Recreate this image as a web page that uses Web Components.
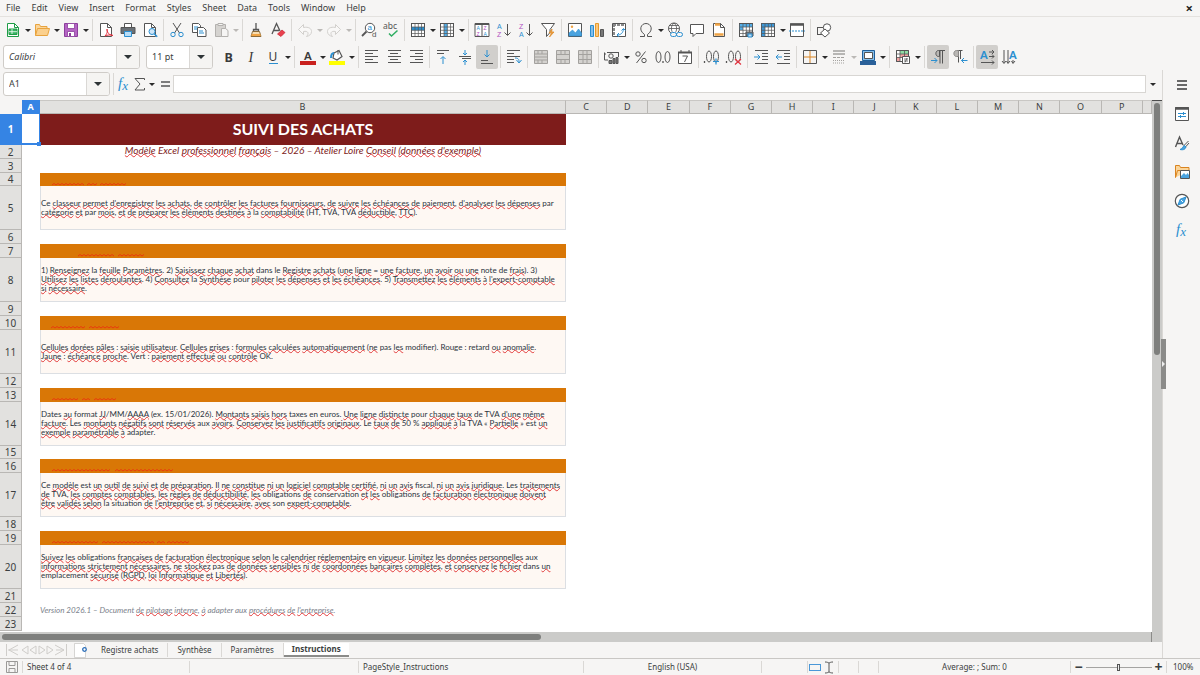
<!DOCTYPE html>
<html lang="fr">
<head>
<meta charset="utf-8">
<title>Suivi des achats</title>
<style>
html, body { margin: 0; height: 100%; }
body { font: 9px/14px "Noto Sans", sans-serif; color: #3b3e40; background: #f6f5f4; overflow: hidden;
  --line: #dad8d5; --blue: #3584e4; --grid: #b9b7b4; --head: #e2e1df; }
</style>
</head>
<body>
<calc-app></calc-app>
<script>
const G = '#555', B = '#2b8fd0';
const lines = (rows, c = G) => rows.map(([x1, x2, y]) => `<path d="M${x1} ${y}H${x2}" stroke="${c}"/>`).join('');
const grid = (fill) => `<rect x="1.5" y="1.5" width="13" height="13" fill="#fff"/>${fill}<path d="M1.5 1.5h13v13h-13zM5 2v12M8.3 2v12M11.5 2v12M2 5h12M2 8.3h12M2 11.5h12" stroke="${G}" stroke-width=".7"/>`;
const page = '<path d="M2.5 1.5h7l4 4v9h-11z" fill="#fff"/>';
const T = (x, y, s, t, c, extra = '') => `<text x="${x}" y="${y}" font-size="${s}" fill="${c}" stroke="none" ${extra}>${t}</text>`;
const LS = 'font-family="Liberation Sans"', P = '#b04fc0';
const ICONS = {
  new: `<g stroke="#1f9d47">${page}<path d="M9.500 1.500v4h4"/><path d="M4 7h8v5.500h-8z" fill="#39b463"/><path d="M4 9.700h8M7 7v5" stroke="#fff" stroke-width=".8"/></g>`,
  open: `<path d="M1.500 13.500v-11h4l1 2h6.500v2" fill="#fbd59a" stroke="#e8a33d"/><path d="M1.500 13.500l2-7h12l-2 7z" fill="#fbd08d" stroke="#e8a33d"/>`,
  save: `<path d="M1.500 1.500h13v13h-13z" fill="#b565c4" stroke="#8c3f9c"/><path d="M4.500 1.500h7v5h-7zM4.500 9.500h7v5h-7z" fill="#fff" stroke="#8c3f9c" stroke-width=".8"/><path d="M6 11h2v3H6z" fill="#8c3f9c" stroke="none"/>`,
  pdf: `${page}<path d="M9.500 1.500v4h4"/><path d="M7 14c3-3 2.500-7 2-7s0 6 6 6.500c-2-1.200-6-.5-8 .5z" stroke="#e2323f" fill="none"/>`,
  print: `<path d="M4.500 5v-3.500h7V5" fill="#fff"/><path d="M1 5.500h14v6H1z" fill="#6a7075"/><path d="M4.500 9.500h7v5h-7z" fill="#b9dcf5" stroke="${B}"/>`,
  preview: `${page}<path d="M9.500 1.500v4h4"/><circle cx="10" cy="9.500" r="3" fill="#cfe6f8" stroke="${B}"/><path d="M12.200 11.700l3 3" stroke="${B}" stroke-width="1.500"/>`,
  cut: `<path d="M4 1l6.500 10M12 1L5.500 11"/><circle cx="4" cy="12.500" r="2.200" stroke="${B}"/><circle cx="12" cy="12.500" r="2.200" stroke="${B}"/>`,
  copy: `<path d="M1.500 1.500h6l2 2v7h-8z" fill="#fff"/><path d="M6.500 5.500h6l2.500 2.500v6.500H6.500z" fill="#fff"/><path d="M3 5h4M3 7h3M8 9h4M8 11h5" stroke="${B}"/>`,
  paste: `<g stroke="#b3b1ae"><path d="M2.500 2.500h10v12h-10z" fill="#d5d3d0"/><path d="M5 1.500h5v2H5z" fill="#f6f5f4"/><path d="M8.500 6.500h4l2.500 2v6H8.500z" fill="#f6f5f4"/></g>`,
  brush: `<path d="M8 1v6M5.500 7.500h5v2h-5z" fill="#fff" stroke-width="1.300"/><path d="M4.500 9.500h7l1.500 5h-10z" fill="#f8ddb0" stroke="#8a6a3a"/><path d="M3.500 13h9" stroke="#f0a445" stroke-width="2"/>`,
  clear: `<path d="M2 12L6.500 1.500 10 9M3.500 8.500H9" stroke-width="1.300"/><path d="M7.500 12l4.500-4 3 2.500-4 4z" fill="#e9414e" stroke="#c9202d" stroke-width=".7"/>`,
  undo: `<path d="M1.500 7.500l5-5v3c5-1 8 1 8 4s-2.500 4.500-5 5c3-3 1.500-6-3-5v3z" stroke="#d2d0cd" fill="#f9f8f7"/>`,
  redo: `<path d="M14.500 7.500l-5-5v3c-5-1-8 1-8 4s2.500 4.500 5 5c-3-3-1.500-6 3-5v3z" stroke="#d2d0cd" fill="#f9f8f7"/>`,
  find: `<circle cx="9" cy="6" r="4.700" fill="#fff"/><path d="M5.500 9.500l-4.500 4.500" stroke-width="1.800"/>${T(6.500, 8, 8, 'a', B, LS)}${T(11, 15, 8, 'd', G, LS)}`,
  spell: `${T(0, 7, 8.500, 'abc', G)}<path d="M6 11.500l2.500 2.500 6-5.500" stroke="#2fae62" stroke-width="1.500"/>`,
  row: grid(`<path d="M1.500 5h13v3.300h-13z" fill="${B}" stroke="none"/>`),
  col: grid(`<path d="M5 2h3.500v12H5z" fill="#54aee8" stroke="none"/>`),
  sort: `<path d="M1 1.500h14v13H1zM8 2v12" fill="#fff"/><path d="M1 2h14" stroke-width="2"/>${T(2.500, 8, 5, 'A', B, LS)}${T(2.500, 14, 5, 'Z', P, LS)}${T(9.500, 8, 5, 'Z', P, LS)}${T(9.500, 14, 5, 'A', B, LS)}`,
  asc: `${T(1, 6.500, 7, 'A', B, LS)}${T(1, 15, 7, 'Z', P, LS)}<path d="M11.500 2v11M8.500 10.500l3 3 3-3"/>`,
  desc: `${T(1, 6.500, 7, 'Z', P, LS)}${T(1, 15, 7, 'A', B, LS)}<path d="M11.500 2v11M8.500 10.500l3 3 3-3"/>`,
  filter: `<path d="M1.500 1.500h13L10 7.500v3l-3.500 4v-7z" fill="#fff"/><path d="M12 7l-3 4h2.500l-2 4 4.500-5h-2.300z" fill="#f0a445" stroke="#d98420" stroke-width=".7"/>`,
  image: `<path d="M1.500 1.500h13v13h-13z" fill="#fff"/><path d="M2 14v-3l3.500-3 3 3 3-4 3 4v3z" fill="#4aa3df" stroke="${B}" stroke-width=".6"/><circle cx="5" cy="4.800" r="1.200" fill="#f0a445" stroke="none"/>`,
  chart: `<path d="M1.500 3.500h3v11h-3z" fill="#83beec" stroke="${B}"/><path d="M6.500 1.500h3v13h-3z" fill="#fbc77f" stroke="#e69b2b"/><path d="M11.500 7.500h3v7h-3z" fill="#777"/>`,
  pivot: `<path d="M1.500 1.500h13v13h-13z" fill="#fff"/><path d="M2 3h12M3 2v12" stroke="#8a8a8a" stroke-width="2" stroke-dasharray="3 1"/><path d="M6 13c4 0 6-2 6.500-6M10.500 8.500l2-2 2 2M8 11l-2 2 2 1.700" stroke="${B}"/>`,
  omega: `<path d="M2 14.500h4.500v-2C0 8 3 1.500 8 1.500s8 6.500 1.500 11v2H14"/>`,
  link: `<circle cx="7" cy="6.500" r="5.500" fill="#fff"/><path d="M1.500 6.500h11M7 1c-3.500 3-3.500 8 0 11M7 1c3.500 3 3.500 8 0 11M2.500 3.500h9" stroke-width=".8"/><path d="M4 10h11v5H4z" fill="#f6f5f4" stroke="none"/><rect x="3.500" y="10.500" width="6" height="4" rx="2" stroke="${B}"/><rect x="9.500" y="10.500" width="6" height="4" rx="2" stroke="${B}"/>`,
  comment: `<path d="M1.500 2.500h13v9H7l-3 3v-3H1.500z" fill="#fff"/>`,
  header: `${page}<path d="M4 2.500h5M3.500 12.500h9" stroke="#f0a445" stroke-width="2.500"/><path d="M9.500 1.500v4h4"/>`,
  printarea: grid(`<path d="M1.500 2h13v3h-13zM1.500 5H5v3H1.500z" fill="#54aee8" stroke="none"/>`) + `<path d="M8 10h7v4H8z" fill="#6a7f90"/><path d="M10 12h4v3h-4z" fill="#b9dcf5" stroke="${B}"/>`,
  freeze: grid(`<path d="M1.500 1.500h13V5H5v9.500H1.500z" fill="#3e98d8" stroke="none"/>`),
  split: `<path d="M1.500 2h13v12.500h-13z" fill="#fff"/><path d="M1 2.500h14" stroke-width="2.500"/><path d="M0 9h16" stroke="${B}" stroke-dasharray="2 1"/>`,
  draw: `<rect x="1.500" y="5.500" width="7" height="7"/><circle cx="11" cy="5.500" r="3.700" fill="#fff"/><path d="M9 7l4.500 4-4.500 4-4.500-4z" fill="#fff"/>`,
  bold: T(3.500, 12.500, 12.500, 'B', '#3a3a3a', 'font-weight="700"'),
  italic: T(5.500, 13, 14, 'I', '#3a3a3a', 'font-style="italic" font-family="Liberation Serif"'),
  underline: `${T(3.500, 12, 12, 'U', '#3a3a3a')}<path d="M4 14.500h9" stroke="${B}"/>`,
  fontcolor: `${T(4, 10.500, 11.500, 'A', '#3a3a3a', 'font-weight="600"')}<path d="M0 14h16" stroke="#c9211e" stroke-width="4"/>`,
  highlight: `<path d="M5 4l5-2.500 3 6-5 3.500-4-2z" fill="#fff" stroke-width="1.200"/><path d="M2 9c0-4 1-5 3-5" stroke="${B}" stroke-width="2"/><path d="M9 5.500V1"/><path d="M0 14h16" stroke="#ff0" stroke-width="4"/>`,
  left: lines([[1, 14, 1.500], [1, 9, 4.500], [1, 14, 7.500], [1, 9, 10.500], [1, 14, 13.500]]),
  center: lines([[2, 15, 1.500], [4, 12, 4.500], [2, 15, 7.500], [4, 12, 10.500], [2, 15, 13.500]]),
  right: lines([[2, 15, 1.500], [7, 15, 4.500], [2, 15, 7.500], [7, 15, 10.500], [2, 15, 13.500]]),
  top: lines([[2, 14, 1.500], [2, 9, 4.500]]) + `<path d="M8 15V8M5.500 10L8 7.500l2.500 2.500" stroke="${B}"/>`,
  middle: lines([[2, 14, 7.500], [5, 14, 9.500]]) + `<path d="M8 1v5M6 4l2 2 2-2M8 16v-5M6 13l2-2 2 2" stroke="${B}"/>`,
  bottom: lines([[2, 14, 14.500], [2, 9, 11.500]]) + `<path d="M8 1v7M5.500 5.500L8 8l2.500-2.500" stroke="${B}"/>`,
  wrap: lines([[1, 14, 1.500], [1, 8, 4.500], [1, 14, 7.500], [1, 8, 10.500], [1, 8, 13.500]]) + `<path d="M9 9c4 0 4 2 4 4M10.500 11l2.500 3 2.500-3" stroke="${B}"/>`,
  merge: `<g stroke="#a3a19e"><path d="M1.500 1.500h13v13h-13z" fill="#d4d2cf"/><path d="M1.500 5h13M1.500 8h13M1.500 11h13M5 2v3M9 2v3M5 11v3M9 11v3"/></g>`,
  merge2: `<g stroke="#a3a19e"><path d="M1.500 1.500h13v13h-13z" fill="#d4d2cf"/><path d="M1.500 5.500h13M1.500 10.500h13M6 2v3M10 2v3M6 11v3M10 11v3"/></g>`,
  split2: `<g stroke="#a3a19e"><path d="M1.500 1.500h13v13h-13z" fill="#d4d2cf"/><path d="M1.500 5.500h13M1.500 10.500h13M6 2v12M10 2v12"/></g>`,
  currency: `<path d="M3 3.500h12M1 6V4M.500 3.500V11H4M14.500 4v4"/><circle cx="7" cy="7" r="2.200"/><path d="M5 14.500v-3h3v3zM9 14.500v-5h2v5zM12 14.500v-6h2v6z" fill="#777"/>`,
  percent: `<circle cx="5" cy="5" r="2.200"/><circle cx="11" cy="11.500" r="2.200"/><path d="M12.500 2.500l-9 11.500"/>`,
  decimal: `<ellipse cx="3.500" cy="8" rx="2.500" ry="5.500"/><ellipse cx="12.500" cy="8" rx="2.500" ry="5.500"/><path d="M8 12v2" stroke-width="1.300"/>`,
  date: `<path d="M1.500 3.500h13v11h-13z" fill="#fff"/><path d="M1 3.500h14" stroke-width="2"/><path d="M4 1v2M12 1v2M5.500 7h5l-3 6"/>`,
  adddec: `<path d="M.500 12v2" stroke-width="1.300"/><ellipse cx="5" cy="7.500" rx="2.500" ry="5.500"/><ellipse cx="12" cy="7.500" rx="2.500" ry="5.500"/><path d="M9 12.500h6M12 9.500v6" stroke="${B}" stroke-width="1.200"/>`,
  deldec: `<path d="M.500 12v2" stroke-width="1.300"/><ellipse cx="5" cy="7.500" rx="2.500" ry="5.500"/><ellipse cx="12" cy="7.500" rx="2.500" ry="5.500"/><path d="M9 10l6 5.500M15 10l-6 5.500" stroke="#e2323f" stroke-width="1.200"/>`,
  indent: lines([[2, 15, 1.500], [9, 15, 4.500], [9, 15, 7.500], [9, 15, 10.500], [2, 15, 14.500]]) + `<path d="M1 8h6M4.500 5.500L7 8l-2.500 2.500" stroke="${B}"/>`,
  outdent: lines([[2, 15, 1.500], [9, 15, 4.500], [9, 15, 7.500], [9, 15, 10.500], [2, 15, 14.500]]) + `<path d="M1 8h6M3.500 5.500L1 8l2.500 2.500" stroke="${B}"/>`,
  border: `<path d="M8 2v12M2 8h12" stroke="#d98420"/><path d="M1.500 1.500h13v13h-13z"/>`,
  bstyle: `<g stroke="#a3a19e"><path d="M2 2h12M2 5h12" stroke-width="1.500"/><path d="M2 8.500h12" stroke-dasharray="3 1"/><path d="M2 11.500h12M2 14h12" stroke-dasharray="1 1"/></g>`,
  bcolor: `<path d="M2.500 1.500h12v10h-12z" fill="#83beec" stroke="#1f5f99"/><path d="M4.500 3.500h8v6h-8z" fill="#fff"/><path d="M0 14h16" stroke="#2a6099" stroke-width="4"/>`,
  cond: `<path d="M1.500 1.500h12v11h-12z" fill="#fff"/><path d="M5 2h8v3H5z" fill="#8fdca4" stroke="none"/><path d="M5 5h8v3.500H5zM2 8.500h3V12H2z" fill="#f2a3a3" stroke="none"/><path d="M1.500 1.500h12v11h-12zM5 2v10M9.500 2v10M2 5h11M2 8.500h11" stroke-width=".8"/><path d="M7.500 7.500h7v7h-7z" fill="#fff"/><path d="M9 10h4M9 12h4M12 9l-2 4.500" stroke-width=".8"/>`,
  ltr: `<path d="M10 14.500v-13M12.500 14.500v-13M15 1.500H9"/><path d="M9.500 1.500v6H8.500c-3.500 0-3.500-6 0-6z" fill="#b9b7b4"/><path d="M1 11.500h6M4.500 9l2.500 2.500L4.500 14" stroke="${B}"/>`,
  rtl: `<path d="M6.500 13.500v-12M8.500 10v-8.500M10.500 1.500H5.500"/><path d="M6.500 1.500v6H4.500c-3.500 0-3.500-6 0-6z" fill="#b9b7b4" stroke="#8a8886"/><path d="M9.500 11.500h6M12 9l-2.500 2.500L12 14" stroke="${B}"/>`,
  across: `${T(1, 10, 11.500, 'A', B, 'font-weight="600"')}<path d="M10 3h5M10 7.500h5M2 13.500h13M13 1l2 2-2 2M13 5.500l2 2-2 2M13 11.500l2 2-2 2"/>`,
  down: `${T(8, 10, 11.500, 'A', B, 'font-weight="600"')}<path d="M3 1v13M7 1v13M12 11v3M1 12l2 2.500L5 12M5.500 12L7 14.500 9 12M10.500 12l1.500 2.500 2-2.500"/>`,
  fx: T(2, 11.500, 15, '<tspan>f</tspan><tspan dy="2" font-size="13">x</tspan>', B, 'font-style="italic" font-family="Liberation Serif"'),
  sigma: `<path d="M12.500 4V2.500H3L8 8l-5 6h9.500v-2"/>`,
  equal: `<path d="M4 6h9M4 10h9" stroke-width="1.600"/>`,
  menu: `<path d="M3 4h10M3 8h10M3 12h10" stroke="#3a3a3a" stroke-width="1.700"/>`,
  props: `<path d="M1.500 1.500h13v13h-13z" fill="#fff"/><path d="M1 2.500h14" stroke-width="2.500"/><path d="M4 7.500h8M4 10.500h8M9.500 6v3M6.500 9v3" stroke="${B}"/>`,
  styles: `<path d="M1.500 12L5.500 2l3.500 8M3 8.500h5" stroke-width="1.400"/><path d="M14.500 6l-5 5M15 8l-4 4.500" /><path d="M10.500 10.500l1.500 1.500c-1 3-3.500 3-6 2.500 2.500-.5 2.500-3 4.500-4z" fill="#4aa3df" stroke="${B}"/>`,
  gallery: `<path d="M1.500 13.500V1.500h4l1 2h8.500v3M1.500 13.500l2-7H15" fill="#fbd59a" stroke="#d98420"/><path d="M6.500 6.500h9v8h-9z" fill="#fff"/><path d="M7 14v-2l3-3 2 2 1.500-2 1.500 2v3z" fill="#4aa3df" stroke="none"/>`,
  nav: `<circle cx="8" cy="8" r="6.700" fill="#fff" stroke-width="1.200"/><path d="M12 4L9.800 9.800 4 12l2.200-5.800z" fill="#4aa3df" stroke="${B}"/><path d="M7 7l2 2" stroke="#fff"/>`,
  disk: `<g stroke="#9a9997"><path d="M2.500 2.500h11v11h-11zM5 2.500h6v4H5zM5 9.500h6v4H5z"/></g>`,
  addsheet: `<path d="M2.500 1.500h9l2 2v12h-11z" fill="#fff" stroke="#c6c4c1" stroke-width=".7"/><circle cx="12.500" cy="7.500" r="1.800" fill="#fff" stroke="#2a6db8" stroke-width="1.300"/>`,
  cursor: `<path d="M4 3c2 0 3 .5 4 1 1-.5 2-1 4-1M8 4v9M4 14c2 0 3-.5 4-1 1 .500 2 1 4 1"/>`
};

function define(name, css, html, setup) {
  const tpl = document.createElement('template');
  tpl.innerHTML = `<style>*{box-sizing:border-box}button,input{font:inherit;color:inherit;border:0;background:none;padding:0;margin:0;min-width:0}${css}</style>${html}`;
  customElements.define(name, class extends HTMLElement {
    connectedCallback() {
      if (this.shadowRoot) return;
      this.attachShadow({ mode: 'open' }).append(tpl.content.cloneNode(true));
      if (setup) setup.call(this, this.shadowRoot);
    }
  });
}

define('calc-icon', ':host{display:block;width:16px;height:16px;flex:none}svg{display:block;width:100%;height:100%;overflow:visible}', '', function (r) {
  r.innerHTML += `<svg viewBox="0 0 16 16" fill="none" stroke="${G}" aria-hidden="true">${ICONS[this.getAttribute('name')]}</svg>`;
});

define('tool-button', `:host{display:block;flex:none}
  button{display:grid;place-items:center;width:22px;height:24px;border-radius:2px}
  :host([narrow]) button{width:16px}
  :host([pressed]) button{background:#d1cfcc}`,
  '<button type="button"></button>', function (r) {
    const n = this.getAttribute('icon'), b = r.querySelector('button');
    b.innerHTML = `<calc-icon name="${n}"></calc-icon>`;
    b.setAttribute('aria-label', n);
  });

define('tool-caret', `:host{display:block;flex:none}
  button{display:grid;place-items:center;width:7px;height:24px}
  i{border:solid transparent;border-width:3px 3px 0;border-top-color:#2a2a2a}
  :host([off]) i{border-top-color:#bbb9b6}`, '<button type="button" aria-label="Options"><i></i></button>');

define('tool-sep', ':host{display:block;flex:none;width:5px;height:22px;background:linear-gradient(var(--line),var(--line)) center/1px 100% no-repeat}:host([wide]){width:6px}', '');

define('combo-box', `:host{display:flex;height:24px;flex:none;border:1px solid #cfccc8;border-radius:3px;background:#fff;overflow:hidden}
  input{flex:1;padding-left:5px}
  button{width:23px;display:grid;place-items:center;background:#f5f4f2;border-left:1px solid #dad8d5}
  i{border:solid transparent;border-width:4px 4px 0;border-top-color:#2e3436}`,
  '<input type="text"><button type="button" aria-label="Open list"><i></i></button>', function (r) {
    const i = r.querySelector('input');
    i.value = this.getAttribute('value'); i.setAttribute('aria-label', this.getAttribute('label'));
    i.style.fontStyle = this.getAttribute('look') || 'normal';
  });

define('menu-bar', `:host{display:flex;align-items:center;height:16px;padding:0 7px 0 6px}
  nav{display:flex;flex:1;gap:11px}button{line-height:16px}.x{font-size:13px;font-weight:700;color:#222}`,
  '<nav></nav><button type="button" class="x" aria-label="Close document">×</button>', function (r) {
    r.querySelector('nav').innerHTML = 'File Edit View Insert Format Styles Sheet Data Tools Window Help'.split(' ').map(t => `<button type="button">${t}</button>`).join('');
  });

// Tool list words: "," is a caret, "-," a disabled caret, "|" a separator, "!x" a pressed button.
define('tool-bar', ':host{display:flex;align-items:center;height:27px;padding-left:2px;border-top:1px solid transparent}:host(:first-of-type){border-top-color:#e4e2df}slot{display:contents}', '<slot></slot>', function (r) {
  let prev = '';
  for (const t of this.getAttribute('tools').split(' ')) {
    let e;
    if (t === ',' || t === '-,') { e = document.createElement('tool-caret'); if (t !== ',') e.setAttribute('off', ''); }
    else if (t === '|') { e = document.createElement('tool-sep'); if (prev.endsWith(',')) e.setAttribute('wide', ''); }
    else { e = document.createElement('tool-button'); e.setAttribute('icon', t.replace('!', '')); if (t[0] === '!') e.setAttribute('pressed', ''); }
    r.append(e); prev = t;
  }
});

define('formula-bar', `:host{display:flex;align-items:center;height:28px;padding:0 6px 0 3px}
  combo-box{width:107px;margin-right:1px}
  .eq{margin-left:2px}
  .f{flex:1;height:18px;background:#fff;border:1px solid #d8d6d3;margin-right:3px;padding:0 4px}`,
  `<combo-box value="A1" label="Name box"></combo-box><tool-sep></tool-sep>
   <tool-button narrow icon="fx"></tool-button><tool-button narrow icon="sigma"></tool-button><tool-caret></tool-caret>
   <tool-button class="eq" narrow icon="equal"></tool-button><input class="f" aria-label="Formula"><tool-caret></tool-caret>`);

const BODY = {
  5: ["Ce {classeur permet d'enregistrer les achats}, {de contrôler les factures fournisseurs}, {de suivre les échéances de paiement}, {d'analyser les dépenses} par",
    "{catégorie et} par {mois}, {et de préparer les éléments destinés à} la {comptabilité} (HT, TVA, TVA {déductible}, {TTC})."],
  8: ["1) {Renseignez} la {feuille Paramètres}. 2) {Saisissez chaque achat} dans le {Registre achats} ({une ligne} = {une facture}, {un avoir ou une} note de {frais}). 3)",
    "{Utilisez les listes déroulantes}. 4) {Consultez} la {Synthèse} pour {piloter les dépenses et les échéances}. 5) {Transmettez les éléments à l'expert-comptable}",
    "{si nécessaire}."],
  11: ["{Cellules dorées pâles} : {saisie utilisateur}. {Cellules grises} : {formules calculées automatiquement} ({ne} pas {les} modifier). Rouge : retard {ou anomalie}.",
    "{Jaune} : {échéance proche}. Vert : {paiement effectué ou contrôle} OK."],
  14: ["Dates {au} format {JJ}/MM/{AAAA} (ex. 15/01/2026). {Montants saisis hors} taxes en euros. {Une ligne distincte} pour {chaque taux} de TVA {d'une même}",
    "{facture}. Les {montants négatifs sont réservés} aux {avoirs}. {Conservez les justificatifs originaux}. Le {taux de} 50 % {appliqué à} la TVA « {Partielle} » est {un}",
    "{exemple paramétrable à} adapter."],
  17: ["Ce {modèle} est {un outil de suivi et de préparation}. {Il ne constitue ni un logiciel comptable certifié}, {ni un avis} fiscal, {ni un avis juridique}. Les {traitements}",
    "{de} TVA, {les comptes comptables}, {les règles de déductibilité}, {les} obligations {de} conservation {et les} obligations {de facturation électronique doivent}",
    "{être validés selon} la situation {de l'entreprise et}, {si nécessaire}, {avec} son {expert-comptable}."],
  20: ["{Suivez les} obligations {françaises de facturation électronique selon le calendrier réglementaire} en {vigueur}. {Limitez les données personnelles} aux",
    "{informations strictement nécessaires}, {ne stockez} pas {de données sensibles ni de coordonnées bancaires complètes}, {et conservez le fichier} dans {un}",
    "emplacement {sécurisé} ({RGPD}, {loi Informatique et Libertés})."]
};
// Spelling marks under each section heading, as [start, length] from the cell's left edge.
const MARKS = {
  4: [[12, 32], [47, 11], [60, 26]], 7: [[38, 37], [78, 26]], 10: [[11, 35], [49, 31]],
  13: [[12, 27], [42, 9], [54, 22]], 16: [[12, 59], [75, 58]], 19: [[12, 47], [62, 52], [117, 8], [127, 23]]
};
const HEIGHTS = [31, 14, 14, 13, 44, 14, 14, 44, 14, 14, 44, 14, 14, 44, 13, 14, 44, 14, 14, 44, 14, 14, 14];
const spell = s => s.replace(/\{([^}]*)\}/g, (_, p) => p.split(' ').map(w => `<u>${w}</u>`).join(' '));
const zig = ([x, n]) => { let d = `M${x} 11`; for (let i = 2; i <= n; i += 2) d += `L${x + i} ${i % 4 ? 9.5 : 11}`; return `<path d="${d}"/>`; };

define('sheet-grid', `:host{display:block;flex:1;min-height:0;overflow:hidden;background:#fff}
  table{width:100%;table-layout:fixed;border-collapse:separate;border-spacing:0}
  th,td{padding:0;font-weight:400}
  thead th{height:14px;line-height:12px;background:var(--head);border-right:1px solid var(--grid);border-bottom:1px solid var(--grid);border-top:1px solid #c9c7c4}
  thead th:first-child{background:#f6f5f4;border-color:#f6f5f4}
  tbody th{background:var(--head);border-right:1px solid var(--grid);border-bottom:1px solid var(--grid);font-size:10px;line-height:12px}
  thead .on,tbody .on{background:var(--blue);border-color:var(--blue);color:#fff;font-weight:700}
  td{font-family:Lato,sans-serif;vertical-align:middle;white-space:nowrap}
  p{margin:0;line-height:9px}
  .title{background:#7e1c1b;color:#fff;text-align:center;font-size:16px;font-weight:700;line-height:20px;padding-bottom:2px}
  .sub{text-align:center;color:#7e1c1b;font-style:italic;font-size:10px;line-height:10px;vertical-align:top}
  .bar{background:#d97706}.bar svg{display:block;width:100%;height:12px;fill:none;stroke:#ee2a10;stroke-width:.8}
  .body{background:#fef8f3;border:1px solid #dcdfe3;border-top:0;color:#2b3440;font-size:8px}
  .note{color:#7b818b;font-style:italic;font-size:8px}
  .cell{position:relative;border:solid var(--blue);border-width:0 1px 2px 0}
  .cell::after{content:"";position:absolute;right:-2px;bottom:-3px;width:4px;height:4px;background:var(--blue)}
  u{text-decoration:underline wavy #e23a3a 1px;text-underline-offset:-1px;text-decoration-skip-ink:none}`,
  '<table><colgroup></colgroup><thead><tr></tr></thead><tbody></tbody></table>', function (r) {
    const cols = 'ABCDEFGHIJKLMNOP'.split('');
    r.querySelector('colgroup').innerHTML = [22, 18, 526].map(w => `<col style="width:${w}px">`).join('') + '<col>'.repeat(14) + '<col style="width:9px">';
    r.querySelector('thead tr').innerHTML = '<th></th>' + cols.map((c, i) => `<th scope="col"${i ? '' : ' class="on"'}>${c}</th>`).join('') + '<th></th>';
    r.querySelector('tbody').innerHTML = HEIGHTS.map((h, i) => {
      const n = i + 1;
      let b = '<td></td>';
      if (n === 1) b = '<td class="title">SUIVI DES ACHATS</td>';
      if (n === 2) b = `<td class="sub">${spell("{Modèle} Excel {professionnel français} – 2026 – Atelier Loire {Conseil (données d'exemple)}")}</td>`;
      if (MARKS[n]) b = `<td class="bar"><svg>${MARKS[n].map(zig).join('')}</svg></td>`;
      if (BODY[n]) b = `<td class="body">${BODY[n].map(t => `<p>${spell(t)}</p>`).join('')}</td>`;
      if (n === 22) b = `<td class="note"><p>${spell("Version 2026.1 – Document {de pilotage interne}, {à} adapter aux {procédures de l'entreprise}.")}</p></td>`;
      return `<tr style="height:${h}px"><th scope="row"${i ? '' : ' class="on"'}>${n}</th><td${i ? '' : ' class="cell"'}></td>${b}<td colspan="15"></td></tr>`;
    }).join('');
  });

define('scroll-bar', `:host{display:block;background:#cbcbc9;padding:2px 3px 2px 2px;flex:none}
  i{display:block;background:#7e7f7d;border-radius:3px}
  :host([dir=v]){width:10px;border-top:1px solid #4d4d4d}:host([dir=v]) i{width:6px;height:47%}
  :host([dir=h]){height:10px;border-right:1px solid #8b8b89}:host([dir=h]) i{height:6px;width:47%}`, '<i></i>');

define('sheet-tabs', `:host{display:flex;align-items:center;height:16px;font-size:8px}
  svg{width:64px;height:14px;margin-left:4px;fill:none;stroke:#cfcdca}
  calc-icon{margin:0 4px}
  button{height:14px;padding:0 9px;border-right:1px solid var(--line);line-height:12px}
  .on{background:#fff;font-weight:700;border:0;border-bottom:2px solid #8b8b89;padding:0 8px}`,
  `<svg viewBox="0 0 64 14" aria-hidden="true"><path d="M2.500 1v12M14 2L5 7l9 5M4 7h10M24 3l-6 4 6 4zM32 3l-6 4 6 4zM35 3l6 4-6 4zM43 3l6 4-6 4zM51 2l9 5-9 5M52 7h8M62.500 1v12"/></svg>
   <calc-icon name="addsheet"></calc-icon>
   <button type="button">Registre achats</button><button type="button">Synthèse</button><button type="button">Paramètres</button><button type="button" class="on">Instructions</button>`);

define('side-bar', `:host{display:flex;flex-direction:column;align-items:center;width:38px;flex:none;border-left:1px solid var(--line);padding-top:3px;gap:5px;position:relative}
  .grip{position:absolute;left:-2px;top:269px;width:5px;height:50px;background:#8b8b89;display:grid;place-items:center}
  .grip i{border:solid transparent;border-width:3px 0 3px 3px;border-left-color:#eee}`,
  `${['menu', 'props', 'styles', 'gallery', 'nav', 'fx'].map(n => `<tool-button icon="${n}"></tool-button>`).join('')}<div class="grip"><i></i></div>`);

define('status-bar', `:host{display:grid;grid-template-columns:23px 167px 169px 225px 178px 46px 31px 20px 20px 1fr 96px 33px;align-items:center;height:17px;border-top:1px solid #c9c7c4;font-size:8px}
  div{display:flex;align-items:center;height:12px;border-right:1px solid var(--line);padding:0 4px;white-space:nowrap}
  div:last-child{border:0;padding:0 6px}.c{justify-content:center;padding:0}
  .box{width:12px;height:7px;border:1px solid #4a98d8;flex:none}
  input{appearance:none;width:66px;height:10px;background:linear-gradient(#a5a4a2,#a5a4a2) center/100% 1px no-repeat}
  input::-webkit-slider-thumb{appearance:none;width:3px;height:7px;border:1px solid #555;background:#eee}
  button{font-size:14px;font-weight:700;width:14px;line-height:10px}`,
  `<div><calc-icon name="disk"></calc-icon></div><div>Sheet 4 of 4</div><div></div><div>PageStyle_Instructions</div><div class="c">English (USA)</div><div></div>
   <div class="c"><span class="box"></span><calc-icon name="cursor"></calc-icon></div><div></div><div></div><div class="c">Average: ; Sum: 0</div>
   <div class="c"><button type="button">−</button><input type="range" aria-label="Zoom"><button type="button">+</button></div><div>100%</div>`);

define('calc-app', `:host{display:flex;flex-direction:column;height:100vh}
  main{display:flex;flex:1;min-height:0}
  .doc{display:flex;flex-direction:column;flex:1;min-width:0}
  .view{display:flex;flex:1;min-height:0;margin-top:2px}
  .sheet{display:flex;flex-direction:column;flex:1;min-width:0}
  .font{width:137px;margin:0 6px 0 1px}.size{width:67px;margin-right:5px}`,
  `<menu-bar></menu-bar>
   <tool-bar tools="new , open , save , | pdf print preview | cut copy paste -, | brush clear | undo -, redo -, | find spell | row , col , | sort asc desc filter | image chart pivot | omega , link comment header | printarea freeze , split | draw"></tool-bar>
   <tool-bar tools="bold italic underline , | fontcolor , highlight , | left center right | top middle !bottom | wrap | merge merge2 split2 | currency , percent decimal date | adddec deldec | indent outdent | border , bstyle -, bcolor , | cond , | !ltr rtl | !across down">
     <combo-box class="font" value="Calibri" label="Font name" look="italic"></combo-box><combo-box class="size" value="11 pt" label="Font size"></combo-box>
   </tool-bar>
   <main><div class="doc"><formula-bar></formula-bar>
     <div class="view"><div class="sheet"><sheet-grid></sheet-grid><scroll-bar dir="h"></scroll-bar></div><scroll-bar dir="v"></scroll-bar></div>
     <sheet-tabs></sheet-tabs></div><side-bar></side-bar></main>
   <status-bar></status-bar>`);
</script>
</body>
</html>
